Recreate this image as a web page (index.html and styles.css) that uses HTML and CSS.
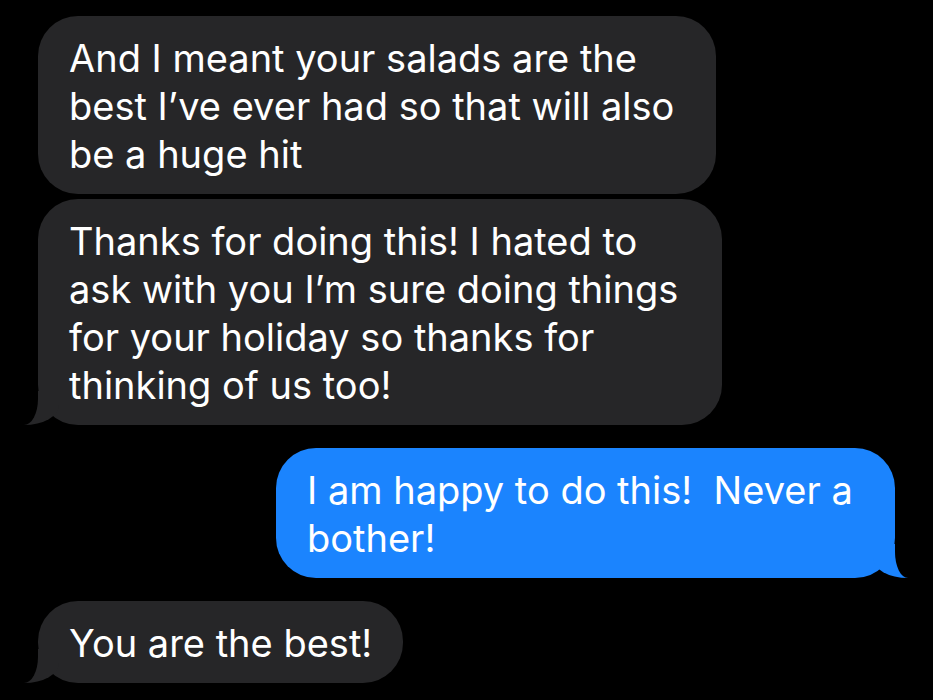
FILE: index.html
```html
<!DOCTYPE html>
<html lang="en">
<head>
<meta charset="utf-8">
<title>Messages</title>
<link rel="stylesheet" href="styles.css">
</head>
<body>
<main class="thread">
  <div class="bubble recv b1">And I meant your salads are the<br>best I’ve ever had so that will also<br>be a huge hit</div>
  <div class="bubble recv tail b2">Thanks for doing this! I hated to<br>ask with you I’m sure doing things<br>for your holiday so thanks for<br>thinking of us too!</div>
  <div class="bubble sent tail b3">I am happy to do this!&nbsp; Never a<br>bother!</div>
  <div class="bubble recv tail b4">You are the best!</div>
</main>
</body>
</html>
```
FILE: styles.css
```css
html, body {
  margin: 0;
  padding: 0;
  background: #000;
}
body {
  width: 933px;
  height: 700px;
  overflow: hidden;
  font-family: Inter, "Noto Sans", sans-serif;
}
.thread {
  display: flex;
  flex-direction: column;
  padding: 16px 38px 0 38px;
}
.bubble {
  position: relative;
  box-sizing: border-box;
  color: #fff;
  font-size: 38px;
  line-height: 48px;
  padding: 18px 20px 16px 31px;
  border-radius: 40px;
  white-space: nowrap;
}
.recv {
  align-self: flex-start;
  background: #262628;
}
.sent {
  align-self: flex-end;
  background: #1b84fe;
}
.b1 { width: 678px; margin-bottom: 5px; }
.b2 { width: 684px; margin-bottom: 23px; }
.b3 { width: 619px; margin-bottom: 23px; }
.b4 { width: 365px; }

.tail::before,
.tail::after {
  content: "";
  position: absolute;
  bottom: 0;
  height: 34px;
}
.recv.tail::before {
  left: -14px;
  width: 35px;
  background: #262628;
  border-bottom-right-radius: 35px 20px;
}
.recv.tail::after {
  left: -30px;
  width: 30px;
  background: #000;
  border-bottom-right-radius: 14px 26px;
}
.sent.tail::before {
  right: -13px;
  width: 35px;
  background: #1b84fe;
  border-bottom-left-radius: 35px 20px;
}
.sent.tail::after {
  right: -30px;
  width: 30px;
  background: #000;
  border-bottom-left-radius: 13px 26px;
}
```
